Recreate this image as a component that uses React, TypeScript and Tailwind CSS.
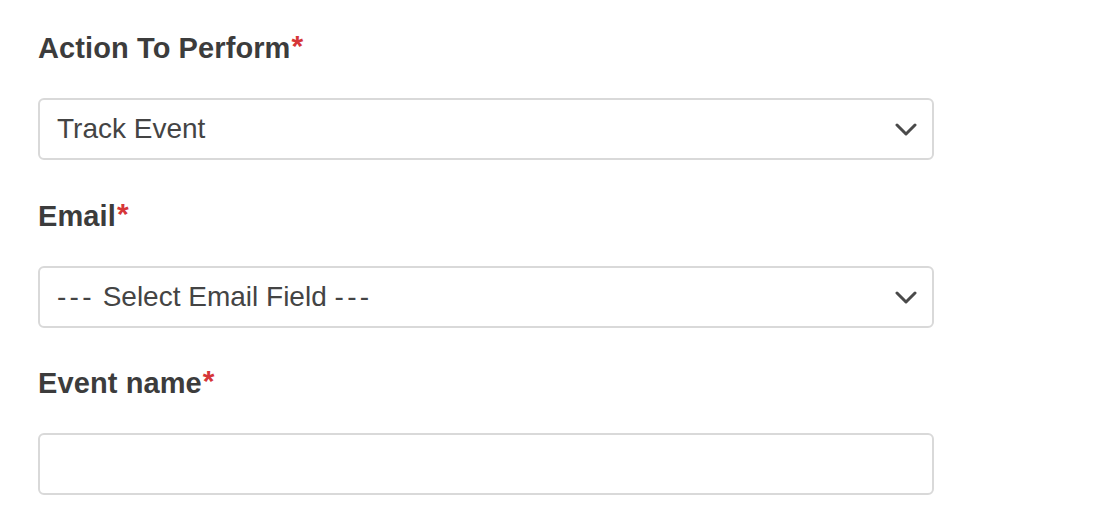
import React from "react";

function Chevron() {
  return (
    <svg width="22" height="13" viewBox="0 0 22 13" fill="none" className="shrink-0">
      <path d="M2 2 L11 11 L20 2" stroke="#4a4a4a" strokeWidth="3" strokeLinecap="round" strokeLinejoin="round" />
    </svg>
  );
}

function Label({ text }: { text: string }) {
  return (
    <div className="text-[29px] leading-[34px] font-bold text-[#3c3c3c] tracking-[0.1px]">
      {text}
      <span className="text-[#d63638] text-[30px] align-top relative top-[-2px] ml-[1px]">*</span>
    </div>
  );
}

function SelectBox({ children }: { children: React.ReactNode }) {
  return (
    <div className="mt-[33px] h-[62px] w-[896px] rounded-[6px] border-2 border-[#d9d9d9] bg-white flex items-center justify-between pl-[17px] pr-[15px]">
      <span className="text-[28px] text-[#444444] leading-none">{children}</span>
      <Chevron />
    </div>
  );
}

export default function App() {
  return (
    <div
      className="w-[1116px] h-[528px] bg-white pl-[38px] pt-[31px]"
      style={{ fontFamily: '"Liberation Sans", Arial, sans-serif' }}
    >
      <Label text="Action To Perform" />
      <SelectBox>Track Event</SelectBox>
      <div className="mt-[39px]">
        <Label text="Email" />
        <SelectBox>
          <span className="tracking-[3.3px]">---</span> Select Email Field <span className="tracking-[3.3px]">---</span>
        </SelectBox>
      </div>
      <div className="mt-[38px]">
        <Label text="Event name" />
        <div className="mt-[33px] h-[62px] w-[896px] rounded-[6px] border-2 border-[#d9d9d9] bg-white" />
      </div>
    </div>
  );
}
